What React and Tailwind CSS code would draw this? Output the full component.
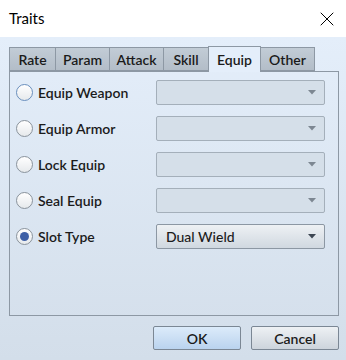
import { X } from "lucide-react";

const tabs = ["Rate", "Param", "Attack", "Skill", "Equip", "Other"];
const tabWidths = ["w-[47px]", "w-[55px]", "w-[55px]", "w-[46px]", "w-[53px]", "w-[55px]"];

const rows = [
  { label: "Equip Weapon", value: "", focus: true },
  { label: "Equip Armor", value: "" },
  { label: "Lock Equip", value: "" },
  { label: "Seal Equip", value: "" },
  { label: "Slot Type", value: "Dual Wield", checked: true },
];

export default function App() {
  return (
    <div className="w-[346px] h-[360px] flex flex-col overflow-hidden text-[14px] text-[#1b1b1b] font-['Lato','Noto_Sans',sans-serif]">
      <div className="h-[37px] shrink-0 bg-white flex items-center justify-between pl-[9px] pr-[7px]">
        <div className="text-[15px] text-black">Traits</div>
        <X className="w-[24px] h-[24px] text-black" strokeWidth={1} />
      </div>

      <div className="flex-1 flex flex-col bg-gradient-to-b from-[#e4eefa] to-[#d3deea] pl-[9px] pr-[7px] pt-[9px]">
        <div className="flex items-end h-[25px]">
          {tabs.map((tab, i) => {
            const active = tab === "Equip";
            return (
              <div
                key={tab}
                className={`${tabWidths[i]} flex items-center justify-center font-semibold border border-[#8d98a4] -ml-px first:ml-0 ${
                  active
                    ? "h-[26px] bg-[#e4eefa] border-b-0 relative z-10 mb-[-1px]"
                    : "h-[24px] bg-gradient-to-b from-[#c2ccd6] to-[#b3bdc8] text-[#1a1a1a]"
                }`}
              >
                {tab}
              </div>
            );
          })}
        </div>

        <div className="h-[245px] border border-[#8d98a4] flex flex-col pt-[8px] gap-[11px] pl-[6px] pr-[13px]">
          {rows.map((row) => (
            <div key={row.label} className="flex items-center h-[25px]">
              <Radio checked={row.checked} focus={row.focus} />
              <div className="ml-[5px] w-[118px] font-semibold">{row.label}</div>
              <Select value={row.value} active={!!row.value} />
            </div>
          ))}
        </div>

        <div className="flex justify-end gap-[10px] mt-[10px]">
          <button className="w-[88px] h-[24px] border border-[#7b8794] rounded-[2px] bg-gradient-to-b from-[#dcebfa] to-[#bad3ee] text-[14px] font-semibold">
            OK
          </button>
          <button className="w-[88px] h-[24px] border border-[#7b8794] rounded-[2px] bg-gradient-to-b from-[#eef1f4] to-[#cdd4dc] text-[14px] font-semibold">
            Cancel
          </button>
        </div>
      </div>
    </div>
  );
}

function Radio({ checked, focus }) {
  return (
    <div
      className={`w-[17px] h-[17px] rounded-full border flex items-center justify-center bg-gradient-to-b from-white to-[#e6e9ec] ${
        focus ? "border-[#6a8fbd]" : "border-[#8a939c]"
      }`}
    >
      {checked && <div className="w-[9px] h-[9px] rounded-full bg-[#3e5fa6]" />}
    </div>
  );
}

function Select({ value, active }) {
  return (
    <div
      className={`flex-1 h-[25px] border rounded-[2px] flex items-center justify-between pl-[9px] pr-[8px] ${
        active
          ? "border-[#8c97a3] bg-gradient-to-b from-[#eef1f4] to-[#d0d8e0]"
          : "border-[#a4afba] bg-[#d5dfe9]"
      }`}
    >
      <span className="font-medium">{value}</span>
      <svg width="8" height="5" viewBox="0 0 8 5">
        <path d="M0 0 H8 L4 4.5 Z" fill={active ? "#3c4652" : "#7d8792"} />
      </svg>
    </div>
  );
}
